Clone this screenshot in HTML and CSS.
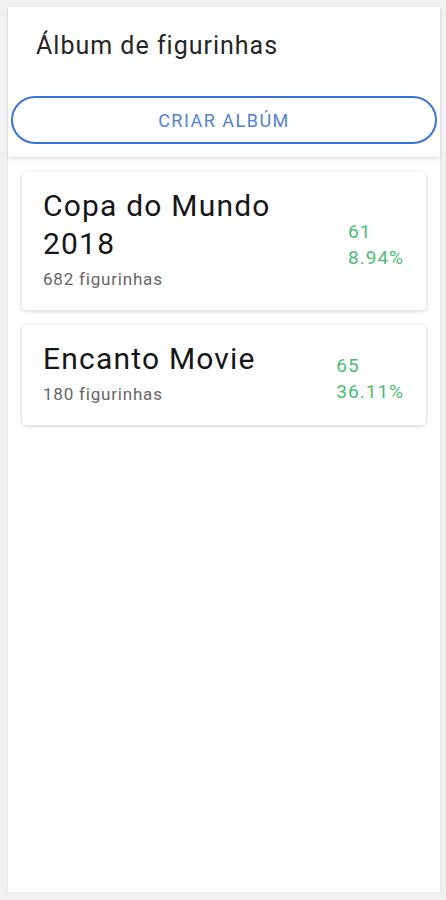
FILE: index.html
```html
<!DOCTYPE html>
<html lang="pt-BR">
<head>
  <meta charset="utf-8">
  <title>Álbum de figurinhas</title>
  <link rel="stylesheet" href="styles.css">
</head>
<body>
  <div class="app">
    <header class="top">
      <h1 class="title">Álbum de figurinhas</h1>
      <button class="create-btn">Criar Albúm</button>
    </header>

    <main class="albums">
      <div class="card">
        <div class="card-info">
          <div class="card-name">Copa do Mundo 2018</div>
          <div class="card-count">682 figurinhas</div>
        </div>
        <div class="card-stats">
          <div>61</div>
          <div>8.94%</div>
        </div>
      </div>

      <div class="card">
        <div class="card-info">
          <div class="card-name">Encanto Movie</div>
          <div class="card-count">180 figurinhas</div>
        </div>
        <div class="card-stats">
          <div>65</div>
          <div>36.11%</div>
        </div>
      </div>
    </main>
  </div>
</body>
</html>
```

FILE: styles.css
```css
    html, body {
      margin: 0;
      background-color: #f1f1f1;
    }
    body {
      font-family: Roboto, "Noto Sans", Arial, sans-serif;
      padding: 7px 6px 8px 8px;
    }
    .app {
      background-color: #ffffff;
      min-height: calc(100vh - 15px);
      box-shadow: 0 0 3px rgba(0, 0, 0, 0.08);
    }
    .top {
      padding: 23px 3px 13px 3px;
      box-shadow: 0 2px 3px rgba(0, 0, 0, 0.12);
      position: relative;
    }
    .title {
      margin: 0 0 34px 25px;
      font-size: 25px;
      font-weight: 400;
      letter-spacing: 1px;
      line-height: 32px;
      color: #262626;
    }
    .create-btn {
      display: block;
      width: 100%;
      height: 48px;
      border: 2px solid #3a72d8;
      border-radius: 24px;
      background: #fff;
      color: #5282d8;
      font-family: Roboto, Arial, sans-serif;
      font-size: 18px;
      letter-spacing: 1.5px;
      text-transform: uppercase;
      cursor: pointer;
    }
    .albums {
      padding: 15px 14px;
      display: flex;
      flex-direction: column;
      gap: 15px;
    }
    .card {
      display: flex;
      align-items: center;
      justify-content: space-between;
      padding: 15px 22px 19px 21px;
      border-radius: 4px;
      box-shadow: 0 1px 4px rgba(0, 0, 0, 0.2);
    }
    .card-info {
      max-width: 260px;
    }
    .card-name {
      font-size: 30px;
      letter-spacing: 1.2px;
      line-height: 38px;
      color: #161616;
    }
    .card-count {
      margin-top: 4px;
      font-size: 17px;
      letter-spacing: 0.8px;
      line-height: 24px;
      color: #666;
    }
    .card-stats {
      font-size: 19px;
      letter-spacing: 1px;
      line-height: 26px;
      color: #4cbd73;
      padding-top: 11px;
    }
```
